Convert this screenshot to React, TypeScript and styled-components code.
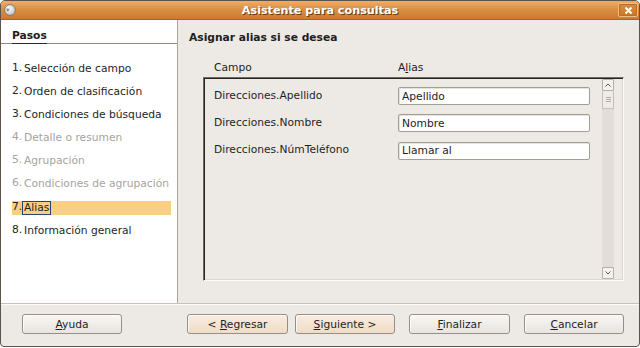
import styled, { createGlobalStyle } from "styled-components";

const GlobalStyle = createGlobalStyle`
  html, body {
    margin: 0;
    padding: 0;
    background: #fff;
  }
  body {
    font-family: "DejaVu Sans", Verdana, sans-serif;
    font-size: 10.7px;
    color: #1e1e1e;
  }
`;

const Window = styled.div`
  width: 640px;
  height: 347px;
  box-sizing: border-box;
  display: flex;
  flex-direction: column;
  border: 1px solid #5b544b;
  border-radius: 5px 5px 4px 4px;
  overflow: hidden;
  background: #edeae5;
`;

const TitleBar = styled.div`
  height: 19px;
  flex-shrink: 0;
  box-sizing: border-box;
  display: grid;
  grid-template-columns: 30px 1fr 30px;
  align-items: center;
  background: linear-gradient(#eeae6c, #dc8f43 45%, #cd7b2d);
  border-bottom: 1px solid #a8641f;
  color: #fff;
  font-weight: bold;
  font-size: 11.2px;
  text-shadow: 1px 1px 0 rgba(70, 35, 0, 0.75);
  .title {
    text-align: center;
  }
`;

const AppIcon = styled.svg`
  margin-left: 3px;
  width: 12px;
  height: 12px;
`;

const CloseButton = styled.div`
  justify-self: end;
  margin-right: 1px;
  width: 20px;
  height: 14px;
  box-sizing: border-box;
  border: 1px solid #efbd86;
  border-radius: 2px;
  box-shadow: inset 0 0 0 1px #b96c24;
  background: linear-gradient(#d88c42, #c8782c);
  display: flex;
  align-items: center;
  justify-content: center;
`;

const Body = styled.div`
  flex: 1;
  display: flex;
  min-height: 0;
`;

const Sidebar = styled.div`
  width: 177px;
  box-sizing: border-box;
  background: #fff;
  border-right: 1px solid #a9a49c;
  display: flex;
  flex-direction: column;
`;

const SidebarHead = styled.div`
  height: 24px;
  box-sizing: border-box;
  display: flex;
  align-items: flex-end;
  padding-left: 11px;
  border-bottom: 1px solid #8e8982;
  span {
    font-weight: bold;
    line-height: 13px;
    padding-bottom: 1px;
    border-bottom: 1px solid #2a2a2a;
    margin-bottom: -1px;
  }
`;

const Steps = styled.div`
  display: flex;
  flex-direction: column;
  gap: 9.2px;
  margin-top: 17.5px;
`;

const Step = styled.div<{ $disabled?: boolean; $active?: boolean }>`
  display: flex;
  height: 14px;
  line-height: 12px;
  margin: 0 6px 0 11px;
  color: ${(p) => (p.$disabled ? "#a7a39e" : "#1e1e1e")};
  background: ${(p) => (p.$active ? "#f9d083" : "transparent")};
  .num {
    width: 10px;
  }
  .label {
    padding: 0 1px;
    border: 1px solid ${(p) => (p.$active ? "#2d4170" : "transparent")};
  }
`;

const Main = styled.div`
  flex: 1;
  display: flex;
  flex-direction: column;
  padding: 11px 15px 22px 11px;
  min-width: 0;
`;

const Heading = styled.div`
  font-weight: bold;
  line-height: 14px;
`;

const ColumnHeads = styled.div`
  display: grid;
  grid-template-columns: 184px auto;
  line-height: 14px;
  margin-top: 16px;
  padding-left: 25px;
`;

const ListFrame = styled.div`
  flex: 1;
  display: flex;
  margin: 2px 0 0 14px;
  border: 1px solid;
  border-color: #6f6a63 #fbfaf8 #fbfaf8 #6f6a63;
  box-shadow: inset 1px 1px 0 #242424, inset -1px -1px 0 #dcd7d0;
`;

const Rows = styled.div`
  flex: 1;
  display: flex;
  flex-direction: column;
  gap: 9.3px;
  padding: 9px 0 0 10px;
`;

const Row = styled.div`
  display: grid;
  grid-template-columns: 184px 192px;
  align-items: center;
  height: 18px;
  span {
    margin-top: -2px;
  }
`;

const Field = styled.input`
  width: 192px;
  height: 18px;
  box-sizing: border-box;
  border: 1px solid #a39d94;
  border-radius: 2px;
  box-shadow: inset 1px 1px 0 #e6e2dc;
  background: #fff;
  padding: 0 3px;
  font-family: "DejaVu Sans", Verdana, sans-serif;
  font-size: 10.7px;
  color: #1e1e1e;
  outline: none;
`;

const Scrollbar = styled.div`
  width: 12px;
  margin: 1px 9px 1px 0;
  display: flex;
  flex-direction: column;
  background: #e2ddd6;
`;

const ScrollButton = styled.div`
  height: 12px;
  box-sizing: border-box;
  border: 1px solid #b4aea6;
  border-radius: 1px;
  background: #f4f2ef;
  display: flex;
  align-items: center;
  justify-content: center;
`;

const Thumb = styled.div`
  height: 18px;
  box-sizing: border-box;
  border: 1px solid #c6c0b8;
  border-top: none;
  background: #efece8;
  display: flex;
  align-items: center;
  justify-content: center;
`;

const Track = styled.div`
  flex: 1;
`;

const Footer = styled.div`
  height: 43px;
  flex-shrink: 0;
  box-sizing: border-box;
  display: flex;
  align-items: flex-start;
  padding: 10px 15px 0 21px;
  border-top: 1px solid #c7c1b8;
  box-shadow: inset 0 1px 0 #fbfaf8;
  .spacer {
    flex: 1;
  }
`;

const Button = styled.div<{ $accent?: boolean; $gap?: number; $w?: number }>`
  width: ${(p) => p.$w ?? 100}px;
  height: 20px;
  box-sizing: border-box;
  margin-left: ${(p) => p.$gap ?? 0}px;
  border: 1px solid #968f86;
  border-radius: 3px;
  background: ${(p) =>
    p.$accent
      ? "linear-gradient(#f8ece0, #f0dcc6)"
      : "linear-gradient(#f8f7f5, #e8e4df)"};
  box-shadow: inset 1px 1px 0 rgba(255, 255, 255, 0.8);
  display: flex;
  align-items: center;
  justify-content: center;
  color: #1e1e1e;
`;

const steps = [
  { n: "1.", t: "Selección de campo" },
  { n: "2.", t: "Orden de clasificación" },
  { n: "3.", t: "Condiciones de búsqueda" },
  { n: "4.", t: "Detalle o resumen", off: true },
  { n: "5.", t: "Agrupación", off: true },
  { n: "6.", t: "Condiciones de agrupación", off: true },
  { n: "7.", t: "Alias", on: true },
  { n: "8.", t: "Información general" },
];

const fields = [
  { f: "Direcciones.Apellido", a: "Apellido" },
  { f: "Direcciones.Nombre", a: "Nombre" },
  { f: "Direcciones.NúmTeléfono", a: "Llamar al" },
];

export default function App() {
  return (
    <>
      <GlobalStyle />
      <Window>
        <TitleBar>
          <AppIcon viewBox="0 0 12 12">
            <defs>
              <radialGradient id="ic" cx="0.4" cy="0.35" r="0.7">
                <stop offset="0" stopColor="#ffffff" />
                <stop offset="1" stopColor="#b9bcc2" />
              </radialGradient>
            </defs>
            <circle cx="6" cy="6" r="5.4" fill="url(#ic)" stroke="#6d6d6d" strokeWidth="0.8" />
            <path d="M2.5 5.2h3M2.8 6.5h2" stroke="#555" strokeWidth="0.8" />
          </AppIcon>
          <span className="title">Asistente para consultas</span>
          <CloseButton>
            <svg width="9" height="9" viewBox="0 0 9 9">
              <path d="M1.5 1.5l6 6M7.5 1.5l-6 6" stroke="#fff" strokeWidth="2" />
            </svg>
          </CloseButton>
        </TitleBar>
        <Body>
          <Sidebar>
            <SidebarHead>
              <span>Pasos</span>
            </SidebarHead>
            <Steps>
              {steps.map((s) => (
                <Step key={s.n} $disabled={s.off} $active={s.on}>
                  <span className="num">{s.n}</span>
                  <span className="label">{s.t}</span>
                </Step>
              ))}
            </Steps>
          </Sidebar>
          <Main>
            <Heading>Asignar alias si se desea</Heading>
            <ColumnHeads>
              <span>Campo</span>
              <span>
                A<u>l</u>ias
              </span>
            </ColumnHeads>
            <ListFrame>
              <Rows>
                {fields.map((r) => (
                  <Row key={r.f}>
                    <span>{r.f}</span>
                    <Field readOnly value={r.a} />
                  </Row>
                ))}
              </Rows>
              <Scrollbar>
                <ScrollButton>
                  <svg width="6" height="4" viewBox="0 0 6 4">
                    <path d="M0.5 3.5L3 1l2.5 2.5" fill="none" stroke="#555" strokeWidth="1" />
                  </svg>
                </ScrollButton>
                <Thumb>
                  <svg width="5" height="5" viewBox="0 0 5 5">
                    <path d="M0 0.5h5M0 2.5h5M0 4.5h5" stroke="#b2aca4" strokeWidth="1" />
                  </svg>
                </Thumb>
                <Track />
                <ScrollButton>
                  <svg width="6" height="4" viewBox="0 0 6 4">
                    <path d="M0.5 0.5L3 3l2.5-2.5" fill="none" stroke="#555" strokeWidth="1" />
                  </svg>
                </ScrollButton>
              </Scrollbar>
            </ListFrame>
          </Main>
        </Body>
        <Footer>
          <Button>
            <span>
              <u>A</u>yuda
            </span>
          </Button>
          <div className="spacer" />
          <Button $accent $w={101}>
            <span>
              &lt; <u>R</u>egresar
            </span>
          </Button>
          <Button $accent $gap={7}>
            <span>
              <u>S</u>iguiente &gt;
            </span>
          </Button>
          <Button $gap={14} $w={101}>
            <span>
              <u>F</u>inalizar
            </span>
          </Button>
          <Button $gap={14}>
            <span>
              <u>C</u>ancelar
            </span>
          </Button>
        </Footer>
      </Window>
    </>
  );
}
